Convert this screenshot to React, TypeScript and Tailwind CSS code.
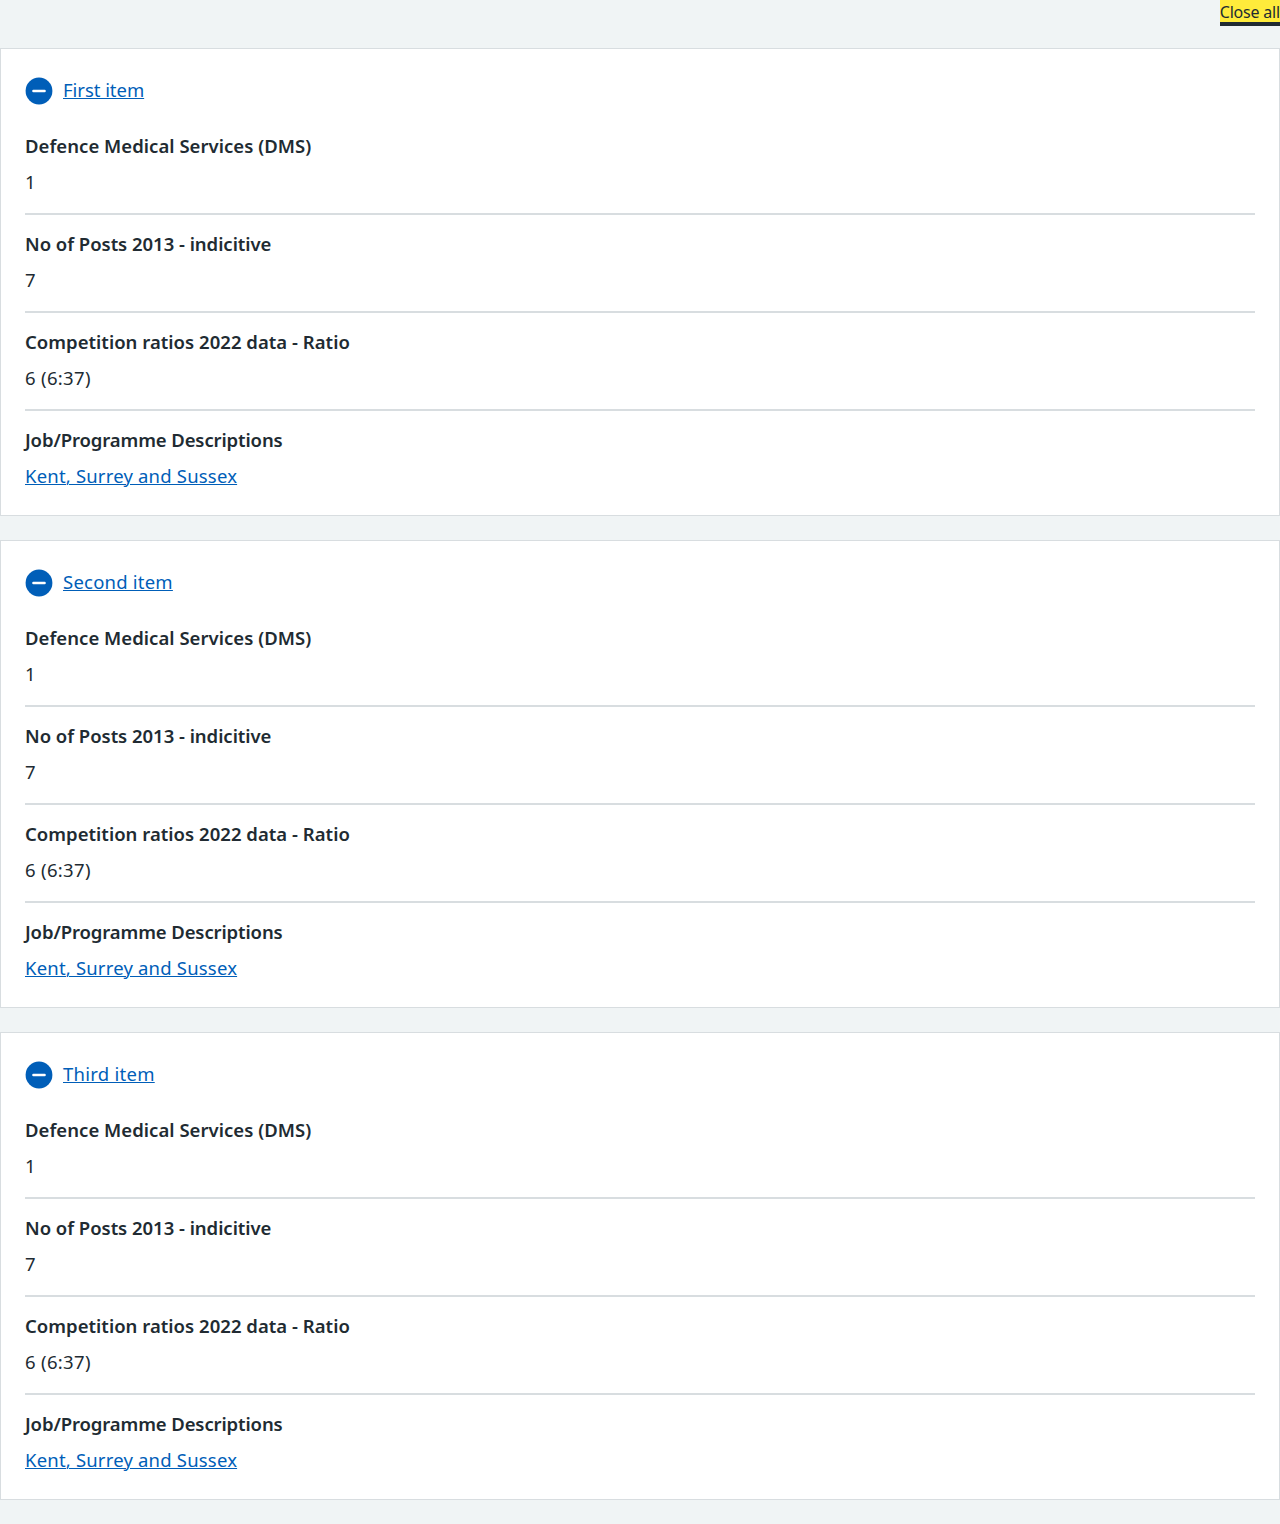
const rows = [
  { label: 'Defence Medical Services (DMS)', value: '1', labelStyle: 'tracking-[0.04px]', valueStyle: '' },
  { label: 'No of Posts 2013 - indicitive', value: '7', labelStyle: 'tracking-[-0.03px]', valueStyle: '' },
  { label: 'Competition ratios 2022 data - Ratio', value: '6 (6:37)', labelStyle: 'tracking-[0.03px]', valueStyle: 'tracking-[0.32px]' },
  { label: 'Job/Programme Descriptions', value: 'Kent, Surrey and Sussex', link: true, labelStyle: 'tracking-[-0.11px]', valueStyle: 'tracking-[0.19px]' },
];

const items = [
  { title: 'First item', titleStyle: 'tracking-[-0.04px]' },
  { title: 'Second item', titleStyle: 'tracking-[0.22px]' },
  { title: 'Third item', titleStyle: 'tracking-[0.26px]' },
];

function MinusIcon() {
  return (
    <svg className="mr-2.5 block size-7 shrink-0" viewBox="0 0 28 28" fill="none" aria-hidden="true">
      <circle cx="14" cy="14" r="13.4" fill="#005eb8" />
      <path d="M8.4 14h11.2" stroke="#fff" strokeWidth="2.4" strokeLinecap="round" />
    </svg>
  );
}

function Card({ title, titleStyle }: { title: string; titleStyle: string }) {
  return (
    <section className="mb-6 border border-[#d8dde0] bg-white px-6 pt-7 pb-6">
      <h2 className="mb-7 flex h-7 items-start text-[#005eb8]">
        <MinusIcon />
        <a className={`underline decoration-1 underline-offset-1 ${titleStyle}`}>{title}</a>
      </h2>
      <dl>
        {rows.map((row) => (
          <div key={row.label} className="mb-4 border-b-2 border-[#d8dde0] pb-4 last:mb-0 last:border-0 last:pb-0">
            <dt className="mb-2 h-7 font-semibold">
              <span className={row.labelStyle}>{row.label}</span>
            </dt>
            <dd className={`h-7 ${row.valueStyle}`}>
              {row.link ? (
                <a className="text-[#005eb8] underline decoration-1 underline-offset-1">{row.value}</a>
              ) : (
                row.value
              )}
            </dd>
          </div>
        ))}
      </dl>
    </section>
  );
}

export default function App() {
  return (
    <main className="flow-root min-h-screen bg-[#f0f4f5] font-['Noto_Sans',sans-serif] text-[18.5px] leading-[26px] text-[#212b32]">
      <div className="flex h-12 items-start justify-end">
        <button className="h-[22px] bg-[#ffeb3b] text-base leading-6 tracking-[-0.19px] whitespace-nowrap shadow-[0_4px_0_0_#212b32]">
          Close all
        </button>
      </div>
      {items.map((item) => (
        <Card key={item.title} title={item.title} titleStyle={item.titleStyle} />
      ))}
    </main>
  );
}
